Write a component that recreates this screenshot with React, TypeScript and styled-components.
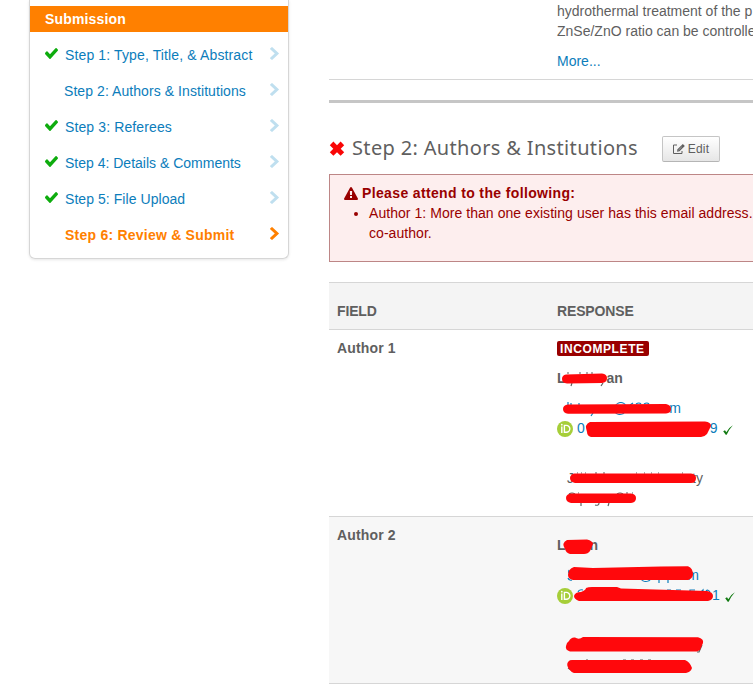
import React from 'react';
import styled, { createGlobalStyle } from 'styled-components';

const GlobalStyle = createGlobalStyle`
  * { box-sizing: border-box; }
  body {
    margin: 0;
    background: #fff;
    color: #5f5f5f;
    font: 14px/20px 'Liberation Sans', Arial, sans-serif;
    overflow: hidden;
  }
`;

const Page = styled.div`
  display: flex;
  align-items: flex-start;
  width: 753px;
  height: 685px;
  overflow: hidden;
  padding-left: 29px;
`;

const Sidebar = styled.nav`
  flex: 0 0 260px;
  height: 259px;
  margin-right: 40px;
  padding-top: 6px;
  border: 1px solid #d6d6d6;
  border-top: 0;
  border-radius: 0 0 6px 6px;
  box-shadow: 0 1px 3px rgba(0, 0, 0, 0.1);
`;

const SidebarTitle = styled.h2`
  margin: 0;
  height: 26px;
  padding-left: 15px;
  background: #ff8000;
  color: #fff;
  font-size: 14px;
  line-height: 26px;
  letter-spacing: 0.15px;
`;

const StepList = styled.ul`
  list-style: none;
  margin: 0;
  padding: 5px 9px 0 15px;
`;

const StepItem = styled.li<{ $active?: boolean }>`
  display: flex;
  align-items: center;
  height: 36px;
  color: ${(p) => (p.$active ? '#ff8000' : '#0c7dbb')};
  font-weight: ${(p) => (p.$active ? 700 : 400)};
`;

const CheckSlot = styled.span`
  display: flex;
  flex: 0 0 20px;
  margin-top: -3px;
`;

const StepLabel = styled.span<{ $shift?: number; $spacing?: number }>`
  flex: 1;
  white-space: nowrap;
  margin-left: ${(p) => p.$shift ?? 0}px;
  letter-spacing: ${(p) => p.$spacing ?? 0}px;
`;

const ArrowSlot = styled.span<{ $active?: boolean }>`
  display: flex;
  margin-top: -3px;
  color: ${(p) => (p.$active ? '#ff8000' : '#bfdfef')};
`;

const Main = styled.main`
  flex: 0 0 560px;
  white-space: nowrap;
`;

const AbstractRow = styled.section`
  height: 80px;
  padding: 1px 0 0 228px;
  border-bottom: 1px solid #d6d6d6;
`;

const AbstractText = styled.p`
  margin: 0 0 10px;
`;

const TextLink = styled.a`
  color: #0c7dbb;
`;

const SectionRule = styled.hr`
  height: 3px;
  margin: 20px 0 0;
  border: 0;
  background: #c6c6c6;
`;

const SectionHeader = styled.header`
  display: flex;
  align-items: center;
  height: 26px;
  margin: 33px 0 12px;
  svg { flex: none; }
`;

const SectionTitle = styled.h1`
  width: 310px;
  margin: -2px 0 0 7px;
  color: #5f5f5f;
  font: 400 20px/26px 'Noto Sans', sans-serif;
  letter-spacing: 0.34px;
`;

const EditButton = styled.button`
  display: flex;
  align-items: center;
  justify-content: center;
  gap: 3px;
  width: 58px;
  height: 26px;
  padding: 0;
  border: 1px solid #c5c5c5;
  border-bottom-color: #b5b5b5;
  border-radius: 2px;
  background: linear-gradient(#fff, #e6e6e6);
  color: #5f5f5f;
  font: 12px/20px 'Liberation Sans', Arial, sans-serif;
  letter-spacing: 0.2px;
`;

const Alert = styled.section`
  height: 88px;
  margin-bottom: 20px;
  padding: 8px 14px;
  border: 1px solid #bd8686;
  background: #fdeeee;
  color: #990000;
`;

const AlertTitle = styled.div`
  display: flex;
  align-items: center;
  gap: 4px;
  font-weight: 700;
  letter-spacing: 0.36px;
`;

const AlertList = styled.ul`
  margin: 0;
  padding-left: 25px;
  letter-spacing: 0.05px;
`;

const TableHead = styled.div`
  display: grid;
  grid-template-columns: 220px 1fr;
  height: 48px;
  padding: 18px 8px 0;
  border: solid #d6d6d6;
  border-width: 1px 0;
  background: #f4f4f4;
  font-weight: 700;
  letter-spacing: -0.15px;
`;

const TableRow = styled.div<{ $shaded?: boolean; $height: number }>`
  display: grid;
  grid-template-columns: 220px 1fr;
  height: ${(p) => p.$height}px;
  padding: 8px 8px 0;
  border-bottom: 1px solid #d6d6d6;
  background: ${(p) => (p.$shaded ? '#f7f7f7' : '#fff')};
`;

const FieldName = styled.div`
  font-weight: 700;
  letter-spacing: 0.15px;
`;

const Status = styled.span`
  display: block;
  width: 92px;
  height: 15px;
  margin: 3px 0 12px;
  padding-left: 3px;
  border-radius: 2px;
  background: #990000;
  color: #fff;
  font-size: 12px;
  font-weight: 700;
  line-height: 16px;
  letter-spacing: 0.6px;
`;

const Line = styled.div<{ $gapTop?: number; $link?: boolean; $bold?: boolean }>`
  position: relative;
  display: flex;
  align-items: center;
  height: 20px;
  margin-top: ${(p) => p.$gapTop ?? 0}px;
  color: ${(p) => (p.$link ? '#0c7dbb' : '#5f5f5f')};
  font-weight: ${(p) => (p.$bold ? 700 : 400)};
`;

const Piece = styled.span<{ $before?: number }>`
  margin-left: ${(p) => p.$before ?? 0}px;
`;

const Scribble = styled.svg`
  position: absolute;
  left: 0;
  top: 0;
  width: 190px;
  height: 20px;
  overflow: visible;
`;

const Badge = styled.span`
  display: flex;
  margin-top: 2px;
`;

const Verified = styled.span<{ $before: number }>`
  display: flex;
  margin: 3px 0 0 ${(p) => p.$before}px;
`;

const CheckIcon = () => (
  <svg width="13" height="11" viewBox="121 334 1550 1188" preserveAspectRatio="none" fill="#0eac0e">
    <path d="M1671 566q0 40-28 68l-724 724-136 136q-28 28-68 28t-68-28l-136-136-362-362q-28-28-28-68t28-68l136-136q28-28 68-28t68 28l294 295 656-657q28-28 68-28t68 28l136 136q28 28 28 68z" />
  </svg>
);

const ChevronIcon = () => (
  <svg width="9" height="13" viewBox="346 26 1036 1612" preserveAspectRatio="none" fill="currentColor">
    <path d="M1363 877l-742 742q-19 19-45 19t-45-19l-166-166q-19-19-19-45t19-45l531-531-531-531q-19-19-19-45t19-45l166-166q19-19 45-19t45 19l742 742q19 19 19 45t-19 45z" />
  </svg>
);

const CrossIcon = () => (
  <svg width="16" height="16" viewBox="-1 0 16 16" fill="#f90606">
    <path d="M3.4 .6L7 4.2 10.6.6 14.2 4.2 10.7 7.7 14.2 11.2 10.6 14.8 7 11.3 3.4 14.8-.2 11.2 3.3 7.7-.2 4.2z" />
  </svg>
);

const WarningIcon = () => (
  <svg width="14" height="13" viewBox="0 0 1792 1664" preserveAspectRatio="none" fill="#990000">
    <path d="M1024 1375v-190q0-14-9.5-23.5t-22.5-9.5h-192q-13 0-22.5 9.5t-9.5 23.5v190q0 14 9.5 23.5t22.5 9.5h192q13 0 22.5-9.5t9.5-23.5zm-2-374l18-459q0-12-10-19-13-11-24-11h-220q-11 0-24 11-10 7-10 21l17 457q0 10 10 16.5t24 6.5h185q14 0 23.5-6.5t10.5-16.5zm-14-934l768 1408q35 63-2 126-17 29-46.5 46t-63.5 17h-1536q-34 0-63.5-17t-46.5-46q-37-63-2-126l768-1408q17-31 47-49t65-18 65 18 47 49z" />
  </svg>
);

const EditIcon = () => (
  <svg width="12" height="10" viewBox="0 0 12 10" fill="none" stroke="#5f5f5f">
    <path d="M4 1H.5v8.5h8.5V7" />
    <path d="M4 7.8l.5-2.6L9.8.1l2 1.8-5.3 5.3z" fill="#5f5f5f" stroke="none" />
    <path d="M5.4 6.2l3.4-3.4" stroke="#ddd" strokeWidth=".5" />
  </svg>
);

const OrcidIcon = () => (
  <Badge>
    <svg width="16" height="16" viewBox="0 0 16 16">
      <circle cx="8" cy="8" r="8" fill="#a6ce39" />
      <path d="M4.8 5.6v6.3M7.4 4.4v6.9h2a3.4 3.4 0 0 0 0-6.9z" fill="none" stroke="#fff" strokeWidth="1.4" />
      <circle cx="4.8" cy="3.7" r=".9" fill="#fff" />
    </svg>
  </Badge>
);

const TickIcon = () => (
  <svg width="10" height="10" viewBox="0 0 10 10">
    <path d="M.2 6.2l1.8-1 1.3 2.1Q5.7 2.5 9.9.2 6.3 4 3.7 9.7H2.7z" fill="#117a11" />
  </svg>
);

/* Hand-drawn marker over private details; paths are relative to the text line. */
const Marker = ({ d, specks }: { d: string; specks?: string }) => (
  <Scribble viewBox="0 0 190 20">
    {specks && <path d={specks} fill="none" stroke="currentColor" strokeWidth="1.2" />}
    <path d={d} fill="#ff080c" />
  </Scribble>
);

const steps = [
  { label: 'Step 1: Type, Title, & Abstract', done: true, spacing: 0.13 },
  { label: 'Step 2: Authors & Institutions', shift: -1, spacing: 0.07 },
  { label: 'Step 3: Referees', done: true, spacing: 0.12 },
  { label: 'Step 4: Details & Comments', done: true },
  { label: 'Step 5: File Upload', done: true, spacing: 0.06 },
  { label: 'Step 6: Review & Submit', active: true, spacing: 0.23 },
];

export default function App() {
  return (
    <>
      <GlobalStyle />
      <Page>
        <Sidebar>
          <SidebarTitle>Submission</SidebarTitle>
          <StepList>
            {steps.map((s) => (
              <StepItem key={s.label} $active={s.active}>
                <CheckSlot>{s.done && <CheckIcon />}</CheckSlot>
                <StepLabel $shift={s.shift} $spacing={s.spacing}>{s.label}</StepLabel>
                <ArrowSlot $active={s.active}><ChevronIcon /></ArrowSlot>
              </StepItem>
            ))}
          </StepList>
        </Sidebar>
        <Main>
          <AbstractRow>
            <AbstractText>
              hydrothermal treatment of the p<br />
              ZnSe/ZnO ratio can be controlle
            </AbstractText>
            <TextLink>More...</TextLink>
          </AbstractRow>
          <SectionRule />
          <SectionHeader>
            <CrossIcon />
            <SectionTitle>Step 2: Authors &amp; Institutions</SectionTitle>
            <EditButton><EditIcon />Edit</EditButton>
          </SectionHeader>
          <Alert>
            <AlertTitle><WarningIcon />Please attend to the following:</AlertTitle>
            <AlertList>
              <li>Author 1: More than one existing user has this email address.<br />co-author.</li>
            </AlertList>
          </Alert>
          <TableHead>
            <span>FIELD</span>
            <span>RESPONSE</span>
          </TableHead>
          <TableRow $height={187}>
            <FieldName>Author 1</FieldName>
            <div>
              <Status>INCOMPLETE</Status>
              <Line $bold>
                <Piece>L</Piece>
                <Piece $before={41}>an</Piece>
                <Marker
                  specks="M10 5h2M15 15l-1 3M22 5h2M29 5h2M34 5h2M46 15l-2 3"
                  d="M9 6.5L45 5.5Q50 6 50 10 50 14.5 45 15L10 15.5Q5 15 5 11 5 7 9 6.5z"
                />
              </Line>
              <Line $gapTop={10} $link>
                <Piece $before={56}>@</Piece>
                <Piece $before={42}>m</Piece>
                <Marker
                  specks="M11 4v3M14 5v2M22 5v2M36 15l-2 3M73 7l3-2M79 6q3-2 5 0M87 6q3-2 5 0"
                  d="M11 6.5L109 6Q114 7 114 11 114 15 109 15.5L11 15.8Q6 15 6 11 6 7 11 6.5z"
                />
              </Line>
              <Line $link>
                <OrcidIcon />
                <Piece $before={4}>0</Piece>
                <Piece $before={125}>9</Piece>
                <Verified $before={5}><TickIcon /></Verified>
                <Marker d="M33 4L148 3.5Q154 4 154 8L150 16Q148 18.5 144 19L34 19Q30 18 30 14 27 6 33 4z" />
              </Line>
              <Line $gapTop={30}>
                <Piece $before={10}>J</Piece>
                <Piece $before={118}>ty</Piece>
                <Marker
                  specks="M20 5h1M24 5h1M28 5h1M38 5h2M46 5h2M79 5h1M87 5h1M94 5h1M101 5h1M125 5h1"
                  d="M17 5.5L134 5.5Q139 6 139 10 139 15 134 15L18 15Q13 14 13 10 13 7 17 5.5z"
                />
              </Line>
              <Line>
                <Marker
                  specks="M12 6q3-2 6 0M21 5h1M24 15v3M42 15q0 3-4 2M52 15l-1 3M60 6q3-2 6 0M69 5h2M75 5h1"
                  d="M14 5.5L74 5.5Q79 6 79 10 79 14.5 74 15L14 15Q9 14 9 10 9 6 14 5.5z"
                />
              </Line>
            </div>
          </TableRow>
          <TableRow $height={167} $shaded>
            <FieldName>Author 2</FieldName>
            <div>
              <Line $gapTop={10} $bold>
                <Piece>L</Piece>
                <Piece $before={24}>n</Piece>
                <Marker d="M10 5L30 4.5Q36 6 36 9L33 16Q31 19 27 19L13 19Q9 18 8 14 4 8 10 5z" />
              </Line>
              <Line $gapTop={10} $link>
                <Piece $before={82}>@</Piece>
                <Piece $before={34}>m</Piece>
                <Marker
                  specks="M12 5q-1 3 1 4M11 13q1 3 4 2M102 14v4M111 14v4"
                  d="M17 2L36 3 104 1.5 131 1.2Q136 3 136 10 135 14 131 15L16 15Q11 14 11 10 11 4 17 2z"
                />
              </Line>
              <Line $link>
                <OrcidIcon />
                <Piece $before={139}>1</Piece>
                <Verified $before={5}><TickIcon /></Verified>
                <Marker
                  specks="M21 7q1-3 5-2M110 5h4M119 5h5M133 7V5h5M143 8l3-3v4M149 6q2-2 4 1"
                  d="M24 7Q29 5 29 3 31 2 35 2L60 2 64 3.5 150 6Q156 7 156 11 156 15 151 16L22 16Q17 14 17 11 18 7 24 7z"
                />
              </Line>
              <Line $gapTop={30}>
                <Marker
                  specks="M145 10l-3 7h-2"
                  d="M12 6Q14 2 18 2.5 22 5 26 2L141 2.3Q147 4 146 8L143 15 140 16.5 13 16.5Q8 15 9 11 9 8 12 6z"
                />
              </Line>
              <Line>
                <Marker
                  specks="M13 6h4M11 13l3 2M29 5h2M66 5h3M74 5h3M83 5h3M91 5h3"
                  d="M15 5L128 5Q133 7 135 13 134 17 129 18L17 18Q14 17 12 14 9 10 11 7 12 5 15 5z"
                />
              </Line>
            </div>
          </TableRow>
        </Main>
      </Page>
    </>
  );
}
